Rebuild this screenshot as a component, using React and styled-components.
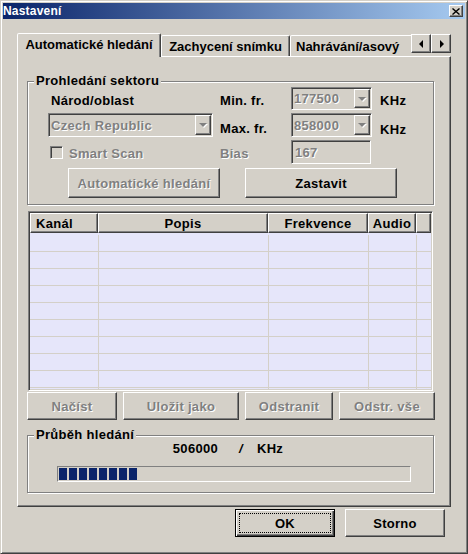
import styled, { createGlobalStyle, css } from "styled-components";

const GlobalStyle = createGlobalStyle`
  html, body {
    margin: 0;
    padding: 0;
    background: #d4d0c8;
  }
  body {
    font-family: "Liberation Sans", Arial, sans-serif;
    font-size: 13px;
    font-weight: 700;
    letter-spacing: 0.3px;
    color: #000;
  }
  * {
    box-sizing: border-box;
  }
`;

// klasické 3D okraje ve stylu Windows 2000
const raised = css`
  border: 1px solid;
  border-color: #fff #404040 #404040 #fff;
  box-shadow: inset -1px -1px 0 #808080, inset 1px 1px 0 #d4d0c8;
`;

const sunken = css`
  border: 1px solid;
  border-color: #808080 #fff #fff #808080;
  box-shadow: inset 1px 1px 0 #404040, inset -1px -1px 0 #d4d0c8;
`;

const disabledText = css`
  color: #808080;
  text-shadow: 1px 1px 0 #fff;
`;

const columns = [
  { title: "Kanál", head: 68, body: 69, align: "flex-start" },
  { title: "Popis", head: 170, body: 170, align: "center" },
  { title: "Frekvence", head: 100, body: 100, align: "center" },
  { title: "Audio", head: 48, body: 48, align: "center" },
];

const App = () => {
  const rows = Array.from({ length: 10 });
  const blocks = Array.from({ length: 8 });

  return (
    <>
      <GlobalStyle />
      <Window>
        <TitleBar>
          <TitleText>Nastavení</TitleText>
          <CloseButton>
            <svg width="8" height="7" viewBox="0 0 8 7">
              <path d="M0.5 0.5 L7.5 6.5 M7.5 0.5 L0.5 6.5" stroke="#000" strokeWidth="1.4" />
            </svg>
          </CloseButton>
        </TitleBar>

        <Body>
          <TabStrip>
            <TabViewport>
              <Tab $active $w={144}>Automatické hledání</Tab>
              <Tab $w={129}>Zachycení snímku</Tab>
              <Tab $w={150} $left>Nahrávání/asový</Tab>
            </TabViewport>
            <ScrollButtons>
              <ArrowButton>
                <Arrow $dir="left" />
              </ArrowButton>
              <ArrowButton>
                <Arrow $dir="right" />
              </ArrowButton>
            </ScrollButtons>
          </TabStrip>

          <Panel>
            <Group>
              <Legend>Prohledání sektoru</Legend>
              <SectorGrid>
                <Label $indent={3} $dy={3}>Národ/oblast</Label>
                <Label $dy={3}>Min. fr.</Label>
                <Combo $w={81}>
                  <ComboText>177500</ComboText>
                  <DropButton>
                    <DownArrow />
                  </DropButton>
                </Combo>
                <Unit $dy={3}>KHz</Unit>

                <Combo $w={165}>
                  <ComboText>Czech Republic</ComboText>
                  <DropButton>
                    <DownArrow />
                  </DropButton>
                </Combo>
                <Label $dy={6}>Max. fr.</Label>
                <Combo $w={81}>
                  <ComboText>858000</ComboText>
                  <DropButton>
                    <DownArrow />
                  </DropButton>
                </Combo>
                <Unit $dy={9}>KHz</Unit>

                <CheckRow>
                  <CheckBox />
                  <CheckLabel>Smart Scan</CheckLabel>
                </CheckRow>
                <Label $dy={3} $disabled>
                  Bias
                </Label>
                <Edit $w={80}>167</Edit>
                <span />
              </SectorGrid>
              <ButtonRow $gap={25} $top={4} $left={40}>
                <Button $w={152} $h={30} disabled>
                  Automatické hledání
                </Button>
                <Button $w={152} $h={30}>
                  Zastavit
                </Button>
              </ButtonRow>
            </Group>

            <ListView>
              <HeaderRow>
                {columns.map((c) => (
                  <HeaderCell key={c.title} $w={c.head} $align={c.align}>
                    {c.title}
                  </HeaderCell>
                ))}
                <HeaderCell $fill />
              </HeaderRow>
              <Rows>
                {rows.map((_, i) => (
                  <Row key={i}>
                    {columns.map((c) => (
                      <Cell key={c.title} $w={c.body} />
                    ))}
                  </Row>
                ))}
              </Rows>
            </ListView>

            <ButtonRow $gap={6} $top={1} $left={0}>
              <Button $w={90} $h={28} disabled>
                Načíst
              </Button>
              <Button $w={116} $h={28} disabled>
                Uložit jako
              </Button>
              <Button $w={88} $h={28} disabled>
                Odstranit
              </Button>
              <Button $w={96} $h={28} disabled>
                Odstr. vše
              </Button>
            </ButtonRow>

            <Group $top={8} $bottom={10}>
              <Legend>Průběh hledání</Legend>
              <Readout>
                <span>506000</span>
                <Slash>/</Slash>
                <span>KHz</span>
              </Readout>
              <Progress>
                {blocks.map((_, i) => (
                  <Block key={i} />
                ))}
              </Progress>
            </Group>
          </Panel>

          <Footer>
            <Button $w={100} $h={28} $default>
              <FocusRing>OK</FocusRing>
            </Button>
            <Button $w={100} $h={28}>
              Storno
            </Button>
          </Footer>
        </Body>
      </Window>
    </>
  );
};

const Window = styled.div`
  width: 468px;
  height: 554px;
  display: flex;
  flex-direction: column;
  background: #d4d0c8;
  border: 1px solid;
  border-color: #d4d0c8 #404040 #404040 #d4d0c8;
  box-shadow: inset 1px 1px 0 #fff, inset -1px -1px 0 #808080;
  padding: 2px;
`;

const TitleBar = styled.div`
  height: 16px;
  display: flex;
  align-items: center;
  justify-content: space-between;
  padding: 0 2px 0 0;
  background: linear-gradient(to right, #0a246a, #a6caf0);
`;

const TitleText = styled.span`
  color: #fff;
  font-size: 12px;
  letter-spacing: 0.2px;
`;

const CloseButton = styled.div`
  ${raised};
  width: 14px;
  height: 12px;
  display: flex;
  align-items: center;
  justify-content: center;
  background: #d4d0c8;
`;

const Body = styled.div`
  flex: 1;
  display: flex;
  flex-direction: column;
  padding: 14px 14px 0;
`;

const TabStrip = styled.div`
  display: flex;
  height: 23px;
`;

const TabViewport = styled.div`
  position: relative;
  z-index: 1;
  width: 394px;
  height: 24px;
  display: flex;
  align-items: flex-end;
  overflow: hidden;
`;

const Tab = styled.div`
  flex-shrink: 0;
  width: ${(p) => p.$w}px;
  height: ${(p) => (p.$active ? 24 : 21)}px;
  margin-bottom: ${(p) => (p.$active ? 0 : 1)}px;
  padding: 0 ${(p) => (p.$left ? 0 : 1)}px ${(p) => (p.$active ? 2 : 0)}px
    ${(p) => (p.$left ? 5 : 1)}px;
  display: flex;
  align-items: center;
  justify-content: ${(p) => (p.$left ? "flex-start" : "center")};
  border: 1px solid;
  border-bottom: none;
  border-color: #fff #404040 transparent #fff;
  border-radius: 2px 2px 0 0;
  box-shadow: inset -1px 0 0 #808080;
  background: #d4d0c8;
  font-size: 13px;
  letter-spacing: 0;
  font-weight: ${(p) => (p.$active ? 700 : 600)};
  white-space: nowrap;
`;

const ScrollButtons = styled.div`
  display: flex;
  margin-top: 1px;
`;

const ArrowButton = styled.div`
  ${raised};
  width: 20px;
  height: 19px;
  display: flex;
  align-items: center;
  justify-content: center;
  background: #d4d0c8;
`;

const Arrow = styled.span`
  width: 0;
  height: 0;
  border-top: 4px solid transparent;
  border-bottom: 4px solid transparent;
  ${(p) =>
    p.$dir === "left"
      ? "border-right: 4px solid #000; margin-right: 1px;"
      : "border-left: 4px solid #000; margin-left: 1px;"}
`;

const Panel = styled.div`
  height: 451px;
  display: flex;
  flex-direction: column;
  padding: 17px 0 0 9px;
  border: 1px solid;
  border-color: #fff #404040 #404040 #fff;
  box-shadow: inset -1px -1px 0 #808080;
`;

const Group = styled.fieldset`
  width: 407px;
  margin: ${(p) => p.$top || 0}px 0 0;
  padding: 0 0 ${(p) => p.$bottom || 6}px;
  min-inline-size: 0;
  border: 1px solid #808080;
  box-shadow: inset 1px 1px 0 #fff, 1px 1px 0 #fff;
`;

const Legend = styled.legend`
  margin-left: 6px;
  padding: 0 2px;
  line-height: 14px;
  background: #d4d0c8;
`;

const SectorGrid = styled.div`
  display: grid;
  grid-template-columns: 172px 71px 81px auto;
  grid-template-rows: 23px 24px 24px;
  row-gap: 3px;
  margin: -1px 0 0 20px;
`;

const Label = styled.span`
  align-self: center;
  padding-top: ${(p) => p.$dy || 0}px;
  padding-left: ${(p) => p.$indent || 0}px;
  white-space: nowrap;
  ${(p) => p.$disabled && disabledText};
`;

const Unit = styled(Label)`
  margin-left: 8px;
`;

const Combo = styled.div`
  ${sunken};
  width: ${(p) => p.$w}px;
  height: 100%;
  display: flex;
  align-items: stretch;
  padding: 1px;
  background: #d4d0c8;
`;

const ComboText = styled.span`
  flex: 1;
  display: flex;
  align-items: center;
  padding-left: 1px;
  ${disabledText};
`;

const DropButton = styled.div`
  ${raised};
  width: 16px;
  display: flex;
  align-items: center;
  justify-content: center;
  background: #d4d0c8;
`;

const DownArrow = styled.span`
  width: 0;
  height: 0;
  border-left: 4px solid transparent;
  border-right: 4px solid transparent;
  border-top: 4px solid #808080;
  filter: drop-shadow(1px 1px 0 #fff);
`;

const Edit = styled.div`
  ${sunken};
  width: ${(p) => p.$w}px;
  height: 100%;
  display: flex;
  align-items: center;
  padding-left: 3px;
  background: #d4d0c8;
  ${disabledText};
`;

const CheckRow = styled.div`
  display: flex;
  align-items: center;
  gap: 6px;
  padding-left: 2px;
`;

const CheckBox = styled.span`
  ${sunken};
  width: 13px;
  height: 13px;
  background: #d4d0c8;
`;

const CheckLabel = styled.span`
  padding-top: 3px;
  ${disabledText};
`;

const ButtonRow = styled.div`
  display: flex;
  gap: ${(p) => p.$gap}px;
  margin: ${(p) => p.$top}px 0 0 ${(p) => p.$left}px;
`;

const Button = styled.button`
  width: ${(p) => p.$w}px;
  height: ${(p) => p.$h}px;
  display: flex;
  align-items: center;
  justify-content: center;
  padding: 0;
  background: #d4d0c8;
  font: inherit;
  font-weight: 700;
  letter-spacing: 0.3px;
  color: #000;
  ${(p) =>
    p.$default
      ? css`
          border: 1px solid #000;
          padding: 3px;
          box-shadow: inset 1px 1px 0 #fff, inset -1px -1px 0 #404040,
            inset -2px -2px 0 #808080;
        `
      : raised};
  ${(p) => p.disabled && disabledText};
`;

const FocusRing = styled.span`
  flex: 1;
  align-self: stretch;
  display: flex;
  align-items: center;
  justify-content: center;
  border: 1px dotted #000;
`;

const ListView = styled.div`
  ${sunken};
  width: 405px;
  height: 180px;
  margin: 6px 0 0 1px;
  padding: 1px;
  display: flex;
  flex-direction: column;
  background: #e6e6fa;
`;

const HeaderRow = styled.div`
  display: flex;
  height: 20px;
  flex-shrink: 0;
`;

const HeaderCell = styled.div`
  ${raised};
  ${(p) => (p.$fill ? "flex: 1;" : `width: ${p.$w}px; flex-shrink: 0;`)}
  display: flex;
  align-items: center;
  justify-content: ${(p) => p.$align || "center"};
  padding-left: ${(p) => (p.$align === "flex-start" ? 5 : 0)}px;
  background: #d4d0c8;
`;

const Rows = styled.div`
  flex: 1;
  overflow: hidden;
  padding-top: 2px;
`;

const Row = styled.div`
  display: flex;
  height: 17px;
  border-bottom: 1px solid #d4d0c8;
`;

const Cell = styled.div`
  width: ${(p) => p.$w}px;
  flex-shrink: 0;
  border-right: 1px solid #d4d0c8;
`;

const Readout = styled.div`
  display: flex;
  justify-content: center;
  line-height: 14px;
  padding-right: 5px;
`;

const Slash = styled.span`
  margin: 0 14px 0 21px;
  font-style: italic;
`;

const Progress = styled.div`
  width: 354px;
  height: 16px;
  margin: 10px 0 0 29px;
  padding: 1px;
  display: flex;
  gap: 2px;
  border: 1px solid;
  border-color: #808080 #fff #fff #808080;
`;

const Block = styled.span`
  width: 8px;
  height: 12px;
  background: #0a246a;
`;

const Footer = styled.div`
  display: flex;
  justify-content: flex-end;
  gap: 10px;
  margin-top: 2px;
  padding-right: 6px;
`;

export default App;
